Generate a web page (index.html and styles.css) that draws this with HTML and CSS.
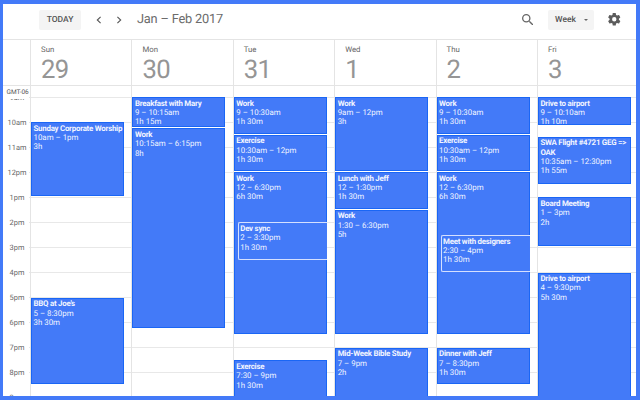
FILE: index.html
```html
<!DOCTYPE html>
<html lang="en">
<head>
<meta charset="utf-8">
<title>Calendar</title>
<link rel="stylesheet" href="styles.css">
</head>
<body>
<div class="app">
  <header class="toolbar">
    <button class="btn today">TODAY</button>
    <svg class="arrow prev" viewBox="0 0 6 8"><path d="M4.6 .8 1.3 4l3.3 3.2"/></svg>
    <svg class="arrow next" viewBox="0 0 6 8"><path d="M1.4 .8 4.7 4 1.4 7.2"/></svg>
    <h1 class="title">Jan – Feb 2017</h1>
    <svg class="search" viewBox="3 3 17.5 17.5"><path d="M15.5 14h-.79l-.28-.27A6.47 6.47 0 0 0 16 9.5 6.5 6.5 0 1 0 9.5 16c1.61 0 3.09-.59 4.23-1.57l.27.28v.79l5 4.99L20.49 19l-4.99-5zm-6 0a4.5 4.5 0 1 1 0-9 4.5 4.5 0 0 1 0 9z"/></svg>
    <button class="btn view">Week<span class="caret"></span></button>
    <svg class="gear" viewBox="2 2 20 20"><path d="M19.43 12.98c.04-.32.07-.64.07-.98s-.03-.66-.07-.98l2.11-1.65c.19-.15.24-.42.12-.64l-2-3.46c-.12-.22-.39-.3-.61-.22l-2.49 1c-.52-.4-1.08-.73-1.69-.98l-.38-2.65A.49.49 0 0 0 14 2h-4c-.25 0-.46.18-.49.42l-.38 2.65c-.61.25-1.17.59-1.69.98l-2.49-1c-.23-.09-.49 0-.61.22l-2 3.46c-.13.22-.07.49.12.64l2.11 1.65c-.04.32-.07.65-.07.98s.03.66.07.98l-2.11 1.65c-.19.15-.24.42-.12.64l2 3.46c.12.22.39.3.61.22l2.49-1c.52.4 1.08.73 1.69.98l.38 2.65c.03.24.24.42.49.42h4c.25 0 .46-.18.49-.42l.38-2.65c.61-.25 1.17-.59 1.69-.98l2.49 1c.23.09.49 0 .61-.22l2-3.46c.12-.22.07-.49-.12-.64l-2.11-1.65zM12 15.5a3.5 3.5 0 1 1 0-7 3.5 3.5 0 0 1 0 7z"/></svg>
  </header>
  <div class="week heads">
    <div></div>
    <div class="head"><span>Sun</span><b>29</b></div>
    <div class="head"><span>Mon</span><b>30</b></div>
    <div class="head"><span>Tue</span><b>31</b></div>
    <div class="head"><span>Wed</span><b>1</b></div>
    <div class="head"><span>Thu</span><b>2</b></div>
    <div class="head"><span>Fri</span><b>3</b></div>
  </div>
  <div class="week allday">
    <div class="zone">GMT-06</div>
    <div class="slot"></div><div class="slot"></div><div class="slot"></div><div class="slot"></div><div class="slot"></div><div class="slot"></div>
  </div>
  <main class="week body">
    <div class="hours"><span>9am</span><span>10am</span><span>11am</span><span>12pm</span><span>1pm</span><span>2pm</span><span>3pm</span><span>4pm</span><span>5pm</span><span>6pm</span><span>7pm</span><span>8pm</span><span>9pm</span></div>
    <div class="day">
      <div class="event" style="grid-row:13/49"><b>Sunday Corporate Worship</b><p>10am – 1pm</p><p>3h</p></div>
      <div class="event" style="grid-row:97/139"><b>BBQ at Joe's</b><p>5 – 8:30pm</p><p>3h 30m</p></div>
    </div>
    <div class="day">
      <div class="event" style="grid-row:1/16"><b>Breakfast with Mary</b><p>9 – 10:15am</p><p>1h 15m</p></div>
      <div class="event" style="grid-row:16/112"><b>Work</b><p>10:15am – 6:15pm</p><p>8h</p></div>
    </div>
    <div class="day">
      <div class="event" style="grid-row:1/19"><b>Work</b><p>9 – 10:30am</p><p>1h 30m</p></div>
      <div class="event" style="grid-row:19/37"><b>Exercise</b><p>10:30am – 12pm</p><p>1h 30m</p></div>
      <div class="event" style="grid-row:37/115"><b>Work</b><p>12 – 6:30pm</p><p>6h 30m</p></div>
      <div class="event nested" style="grid-row:61/79"><b>Dev sync</b><p>2 – 3:30pm</p><p>1h 30m</p></div>
      <div class="event" style="grid-row:127/145"><b>Exercise</b><p>7:30 – 9pm</p><p>1h 30m</p></div>
    </div>
    <div class="day">
      <div class="event" style="grid-row:1/37"><b>Work</b><p>9am – 12pm</p><p>3h</p></div>
      <div class="event" style="grid-row:37/55"><b>Lunch with Jeff</b><p>12 – 1:30pm</p><p>1h 30m</p></div>
      <div class="event" style="grid-row:55/115"><b>Work</b><p>1:30 – 6:30pm</p><p>5h</p></div>
      <div class="event" style="grid-row:121/145"><b>Mid-Week Bible Study</b><p>7 – 9pm</p><p>2h</p></div>
    </div>
    <div class="day">
      <div class="event" style="grid-row:1/19"><b>Work</b><p>9 – 10:30am</p><p>1h 30m</p></div>
      <div class="event" style="grid-row:19/37"><b>Exercise</b><p>10:30am – 12pm</p><p>1h 30m</p></div>
      <div class="event" style="grid-row:37/115"><b>Work</b><p>12 – 6:30pm</p><p>6h 30m</p></div>
      <div class="event nested" style="grid-row:67/85"><b>Meet with designers</b><p>2:30 – 4pm</p><p>1h 30m</p></div>
      <div class="event" style="grid-row:121/139"><b>Dinner with Jeff</b><p>7 – 8:30pm</p><p>1h 30m</p></div>
    </div>
    <div class="day">
      <div class="event" style="grid-row:1/15"><b>Drive to airport</b><p>9 – 10:10am</p><p>1h 10m</p></div>
      <div class="event" style="grid-row:20/43"><b>SWA Flight #4721 GEG =&gt; OAK</b><p>10:35am – 12:30pm</p><p>1h 55m</p></div>
      <div class="event" style="grid-row:49/73"><b>Board Meeting</b><p>1 – 3pm</p><p>2h</p></div>
      <div class="event" style="grid-row:85/151"><b>Drive to airport</b><p>4 – 9:30pm</p><p>5h 30m</p></div>
    </div>
  </main>
</div>
</body>
</html>
```
FILE: styles.css
```css
* { box-sizing: border-box; margin: 0; padding: 0; }
body { width: 640px; height: 400px; overflow: hidden; background: #437af8; font-family: Roboto, "Liberation Sans", sans-serif; color: #555; text-rendering: geometricPrecision; }
.app { display: flex; flex-direction: column; width: 633px; height: 392px; margin: 4px 4px 4px 3px; background: #fff; overflow: hidden; }

.toolbar { display: flex; flex: none; align-items: center; height: 35px; padding: 0 15.5px 4px 36px; }
.btn { display: flex; align-items: center; justify-content: center; height: 20px; border: 0; border-radius: 2px; background: #f4f4f4; font: 500 8.5px Roboto, sans-serif; color: #555; text-rendering: geometricPrecision; }
.today { width: 42px; }
.arrow { width: 6px; height: 8px; fill: none; stroke: #555; stroke-width: 1.1; }
.prev { margin-left: 15px; }
.next { margin-left: 14px; }
.title { margin-left: 15px; font-size: 12.8px; font-weight: 400; letter-spacing: -.2px; color: #6c6c6c; white-space: nowrap; }
.search { width: 11.5px; height: 11.5px; margin-left: auto; fill: #666; }
.view { width: 46px; margin: 0 14.5px 0 14.5px; }
.caret { margin-left: 8px; border: 2.5px solid transparent; border-top-color: #666; border-bottom: 0; }
.gear { width: 12.5px; height: 12.5px; fill: #5c5c5c; }

.view { padding-left: 2px; }

.week { display: grid; flex: none; grid-template-columns: 27px repeat(6, 101.4px); }
.heads { height: 46px; border-top: 1px solid #e4e4e4; }
.head { display: flex; flex-direction: column; padding: 5px 0 0 10px; border-left: 1px solid #e4e4e4; }
.head span { font-size: 7.8px; line-height: 10px; color: #666; }
.head b { font-size: 25.7px; font-weight: 400; line-height: 31px; color: #959595; letter-spacing: -.6px; }
.allday { height: 12px; border-top: 1px solid #e4e4e4; }
.slot { border-left: 1px solid #e4e4e4; }
.zone { padding-left: 3.5px; font-size: 6.5px; line-height: 12px; white-space: nowrap; }

.body { height: 299px; overflow: hidden; background: repeating-linear-gradient(#e8e8e8 0 1px, #fff 1px 25px) 26px 0 no-repeat; }
.hours { display: flex; flex-direction: column; margin-top: -12px; width: 28px; clip-path: inset(14px 0 0); }
.hours span { flex: 0 0 25px; font-size: 7.4px; line-height: 25px; text-align: center; color: #666; }
.day { display: grid; height: 313.5px; grid-template-rows: repeat(150, minmax(0, 1fr)); grid-template-columns: 93px; border-left: 1px solid #e4e4e4; min-width: 0; }
.event { grid-column: 1; min-height: 0; margin-bottom: 1px; padding: .6px 0 0 1.5px; overflow: hidden; border: 1px solid #1a66f5; background: #437af8; color: #f2f5ff; font-size: 7.9px; line-height: 9.3px; }
.event b { display: block; margin-right: -2px; font-weight: 700; letter-spacing: -.25px; }
.nested { margin: 0 0 .5px 4px; border: 1px solid #d5e0ff; border-right: 0; border-radius: 2px 0 0 2px; }
```
